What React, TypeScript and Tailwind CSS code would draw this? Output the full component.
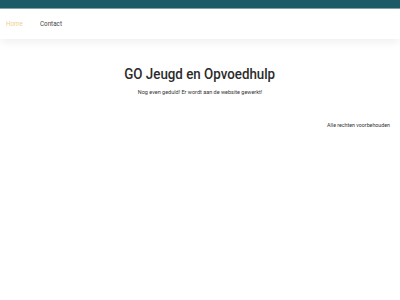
import React from 'react';

const App: React.FC = () => {
  return (
    <div className="min-h-[300px] w-[400px] bg-white font-['Roboto',sans-serif]">
      <div className="h-[8px] bg-[#1b5a66]"></div>
      <div className="h-[1px] bg-[#7fa3aa]"></div>
      <nav className="flex h-[30px] items-center gap-[17px] px-[6px] pt-[1px] shadow-[0_4px_8px_rgba(0,0,0,0.06)]">
        <a className="text-[6.3px] text-[#f0cf95]">Home</a>
        <a className="text-[6.3px] text-[#444]">Contact</a>
      </nav>
      <main className="pt-[23px] text-center">
        <h1 className="inline-block scale-x-[0.86] text-[15.5px] font-medium leading-[20px] text-[#2b2b2b]">
          GO Jeugd en Opvoedhulp
        </h1>
        <p className="mt-[2px] text-[5.5px] text-[#333]">Nog even geduld! Er wordt aan de website gewerkt!</p>
      </main>
      <footer className="mt-[26px] px-[10px] text-right text-[5.3px] text-[#333]">
        Alle rechten voorbehouden
      </footer>
    </div>
  );
};

export default App;
